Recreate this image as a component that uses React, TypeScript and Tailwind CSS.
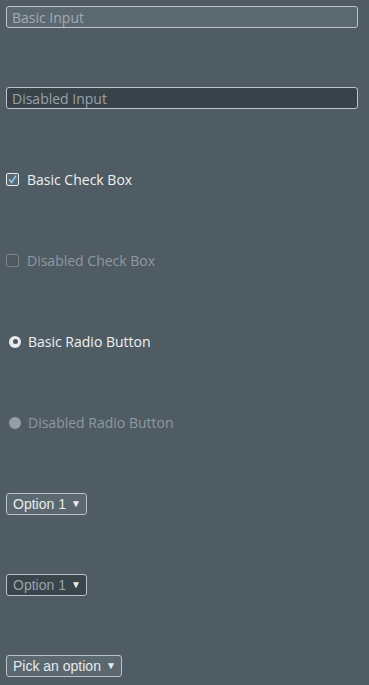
const Check = () => (
    <svg viewBox="0 0 13 13" className="h-[13px] w-[13px]">
        <path d="M3 7 L5.4 10.2 L10.2 2.6" fill="none" stroke="#8fc9f2" strokeWidth="1.9" strokeLinecap="round" strokeLinejoin="round" />
    </svg>
);

const Arrow = () => <span className="ml-[5px] text-[10px] leading-none text-[#e8ecee]">▼</span>;

const SelectBox = ({ label, disabled }: { label: string; disabled?: boolean }) => (
    <div
        className={`mt-px inline-flex h-[22px] items-center rounded-[3px] border border-[#b9c2c7] pr-[5px] pl-[6px] font-['Liberation_Sans',Arial,sans-serif] text-[14px] ${
            disabled ? 'bg-[#3a444b] text-[#98a3a9]' : 'bg-[#5b6870] text-[#e6eaec]'
        }`}
    >
        <span>{label}</span>
        <Arrow />
    </div>
);

const App = () => {
    return (
        <div className="h-screen w-full overflow-hidden bg-[#505c64] px-[6px] pt-[6px] font-['Open_Sans',sans-serif] text-[14px]">
            {/* text inputs */}
            <div className="h-[81px]">
                <input
                    placeholder="Basic Input"
                    className="h-[22px] w-[352px] rounded-[3px] border border-[#bcc4c9] bg-[#5b6870] px-[5px] text-[#e6eaec] placeholder:text-[#a1acb2] focus:outline-none"
                />
            </div>
            <div className="h-[81px]">
                <input
                    disabled
                    placeholder="Disabled Input"
                    className="h-[22px] w-[352px] rounded-[3px] border border-[#bcc4c9] bg-[#384249] px-[5px] placeholder:text-[#98a3a9]"
                />
            </div>

            {/* check boxes */}
            <div className="h-[81px]">
                <div className="flex h-[23px] items-center gap-[8px] text-[#eef1f2]">
                    <span className="flex h-[13px] w-[13px] items-center justify-center rounded-[2px] border border-[#e8ecee] bg-[#5b6870]">
                        <Check />
                    </span>
                    <span>Basic Check Box</span>
                </div>
            </div>
            <div className="h-[81px]">
                <div className="flex h-[23px] items-center gap-[8px] text-[#8e999f]">
                    <span className="h-[13px] w-[13px] rounded-[2px] border border-[#78848b] bg-[#4d585f]" />
                    <span>Disabled Check Box</span>
                </div>
            </div>

            {/* radio buttons */}
            <div className="h-[81px]">
                <div className="flex h-[23px] items-center gap-[7px] text-[#eef1f2]">
                    <span className="ml-[3px] flex h-[12px] w-[12px] items-center justify-center rounded-full bg-[#e8ebed]">
                        <span className="h-[5px] w-[5px] rounded-full bg-[#4c565c]" />
                    </span>
                    <span>Basic Radio Button</span>
                </div>
            </div>
            <div className="h-[81px]">
                <div className="flex h-[23px] items-center gap-[7px] text-[#8e999f]">
                    <span className="ml-[3px] h-[12px] w-[12px] rounded-full bg-[#959ea4]" />
                    <span>Disabled Radio Button</span>
                </div>
            </div>

            {/* selects */}
            <div className="h-[81px]">
                <SelectBox label="Option 1" />
            </div>
            <div className="h-[81px]">
                <SelectBox label="Option 1" disabled />
            </div>
            <div>
                <SelectBox label="Pick an option" />
            </div>
        </div>
    );
};

export default App;
